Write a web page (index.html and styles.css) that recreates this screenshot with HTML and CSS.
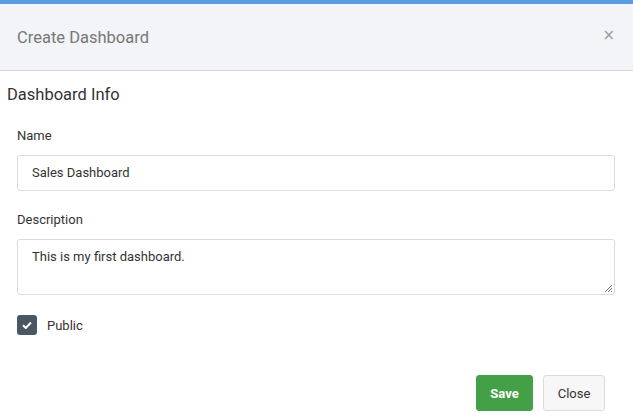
FILE: index.html
```html
<!DOCTYPE html>
<html>
<head>
<meta charset="utf-8">
<link rel="stylesheet" href="styles.css">
</head>
<body>
<div class="modal">
  <div class="topbar"></div>
  <div class="header">
    <div class="title">Create Dashboard</div>
    <div class="close-x">×</div>
  </div>
  <div class="section-title">Dashboard Info</div>
  <div class="form">
    <div class="field">
      <label class="label">Name</label>
      <div class="input">Sales Dashboard</div>
    </div>
    <div class="field">
      <label class="label">Description</label>
      <div class="textarea">This is my first dashboard.
        <svg class="grip" width="10" height="10" viewBox="0 0 10 10"><path d="M9 2L2 9M9 5L5 9M9 8L8 9" stroke="#777" stroke-width="1"/></svg>
      </div>
    </div>
    <div class="check-row">
      <span class="checkbox"><svg width="10" height="8" viewBox="0 0 10 8"><path d="M1 4.2L3.8 7L9 1.5" fill="none" stroke="#fff" stroke-width="2"/></svg></span>
      <span class="check-label">Public</span>
    </div>
  </div>
  <div class="footer">
    <button class="btn btn-save">Save</button>
    <button class="btn btn-close">Close</button>
  </div>
</div>
</body>
</html>
```
FILE: styles.css
```css
html, body {
  margin: 0;
  padding: 0;
  background: #fff;
  font-family: Roboto, "Liberation Sans", sans-serif;
  color: #333;
}
.modal {
  width: 633px;
  height: 417px;
  overflow: hidden;
}
.topbar {
  height: 4px;
  background: #5b9be1;
}
.header {
  height: 67px;
  background: #f2f4f7;
  border-bottom: 1px solid #d6d6dc;
  box-sizing: border-box;
  display: flex;
  align-items: center;
  justify-content: space-between;
  padding: 0 17px 0 17px;
}
.title {
  font-size: 16.5px;
  color: #777;
  margin-top: 1px;
}
.close-x {
  font-size: 15px;
  color: #999;
  font-family: "DejaVu Sans", sans-serif;
  margin-top: -4px;
  margin-right: 1px;
}
.section-title {
  font-size: 16.5px;
  color: #333;
  padding: 13px 7px 0;
  line-height: 22px;
}
.form {
  padding: 0 18px 0 17px;
}
.field {
  display: flex;
  flex-direction: column;
}
.label {
  font-size: 13px;
  line-height: 16px;
  color: #333;
  margin-top: 22px;
  margin-bottom: 11px;
}
.field + .field .label {
  margin-top: 21px;
}
.input, .textarea {
  border: 1px solid #dcdcdc;
  border-radius: 3px;
  font-size: 13px;
  color: #333;
  padding: 0 14px;
  box-sizing: border-box;
}
.input {
  height: 36px;
  line-height: 34px;
}
.textarea {
  height: 56px;
  padding-top: 9px;
  line-height: 16px;
  position: relative;
}
.grip {
  position: absolute;
  right: 1px;
  bottom: 1px;
}
.check-row {
  display: flex;
  align-items: center;
  margin-top: 20px;
}
.checkbox {
  width: 20px;
  height: 20px;
  border-radius: 3px;
  background: #4a5762;
  display: flex;
  align-items: center;
  justify-content: center;
}
.check-label {
  font-size: 13px;
  margin-left: 10px;
}
.footer {
  display: flex;
  justify-content: flex-end;
  gap: 10px;
  padding: 40px 28px 0 0;
}
.btn {
  height: 36px;
  border-radius: 3px;
  font-size: 13px;
  font-family: Roboto, "Liberation Sans", sans-serif;
  padding: 0;
  cursor: pointer;
}
.btn-save {
  width: 57px;
  background: #43a047;
  border: 1px solid #43a047;
  color: #fff;
  font-weight: bold;
}
.btn-close {
  width: 62px;
  background: #f7f7f7;
  border: 1px solid #dcdcdc;
  color: #333;
}
```
